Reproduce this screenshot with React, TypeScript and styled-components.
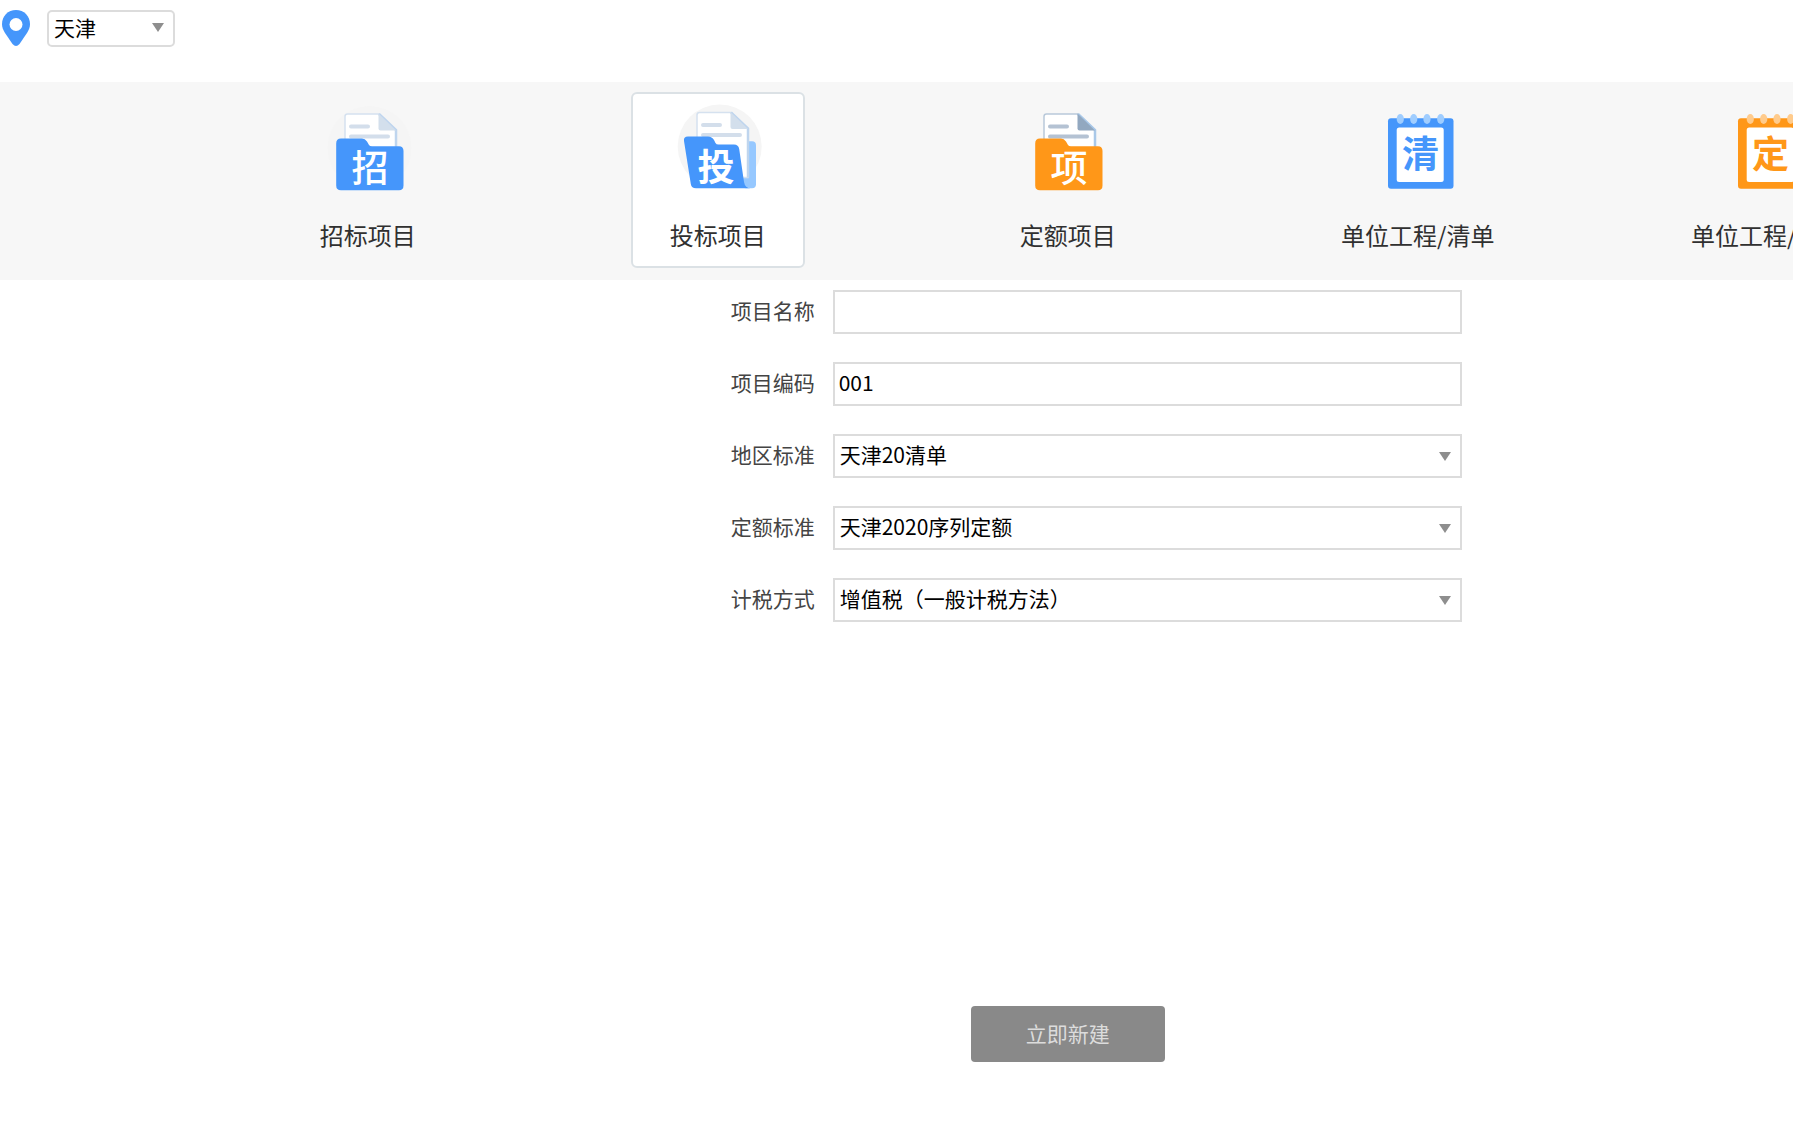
import React, { useState } from 'react';
import styled, { createGlobalStyle } from 'styled-components';

const BLUE = '#4596fb';
const ORANGE = '#ff9718';
const FONT = '"Noto Sans CJK SC", "Noto Sans", sans-serif';

const GlobalStyle = createGlobalStyle`
  *, *::before, *::after { box-sizing: border-box; }
  body {
    margin: 0;
    background: #fff;
    font-family: ${FONT};
    overflow: hidden;
  }
  button, input, select { font-family: inherit; }
`;

const Viewport = styled.div`
  overflow: hidden;
`;

/* The workspace is wider than the window; its right side is cut off. */
const Workspace = styled.main`
  display: flex;
  flex-direction: column;
  width: 119.1vw;
  min-height: 100vh;
  padding-bottom: 77px;
`;

const RegionBar = styled.header`
  display: flex;
  align-items: flex-start;
  gap: 16px;
  height: 82px;
  padding: 10px 1px;
`;

const Pin = styled.svg`
  flex: none;
  width: 30px;
  height: 36px;
`;

const TypeBar = styled.nav`
  display: grid;
  grid-template-columns: repeat(5, minmax(0, 350px));
  justify-content: center;
  justify-items: center;
  padding: 10px 0 12px;
  background: #f7f7f7;
`;

const TypeCard = styled.button<{ $active: boolean }>`
  display: flex;
  flex-direction: column;
  align-items: center;
  gap: 26px;
  min-width: 174px;
  height: 176px;
  padding: 11px 6px;
  border: 2px solid ${(p) => (p.$active ? '#dbe1e5' : 'transparent')};
  border-radius: 6px;
  background: ${(p) => (p.$active ? '#fff' : 'transparent')};
  color: #303030;
  font-size: 24px;
  line-height: 32px;
  white-space: nowrap;
  cursor: pointer;
`;

const TypeIcon = styled.svg`
  flex: none;
  width: 84px;
  height: 88px;
  overflow: visible;
`;

const Glyph = styled.text`
  font-family: ${FONT};
  font-size: 37px;
  font-weight: 500;
  text-anchor: middle;
`;

const BoldGlyph = styled(Glyph)`
  font-weight: 700;
`;

const Form = styled.form`
  display: flex;
  flex: 1;
  flex-direction: column;
  align-items: center;
  gap: 28px;
  padding-top: 10px;
`;

const Row = styled.div`
  display: grid;
  grid-template-columns: 141px minmax(0, 1fr);
  align-items: center;
  column-gap: 18px;
  width: 100%;
  max-width: 788px;
`;

const Label = styled.label`
  padding-bottom: 4px;
  color: #444;
  font-size: 21px;
  line-height: 30px;
  text-align: right;
`;

const TextInput = styled.input`
  width: 100%;
  height: 44px;
  padding: 0 4px 4px;
  border: 2px solid #dcdcdc;
  border-radius: 0;
  background: #fff;
  color: #000;
  font-size: 21px;
  outline: none;
`;

const SelectBox = styled.div<{ $compact?: boolean }>`
  position: relative;
  width: ${(p) => (p.$compact ? '128px' : '100%')};

  &::after {
    content: '';
    position: absolute;
    top: calc(50% - ${(p) => (p.$compact ? 6 : 4)}px);
    right: 11px;
    border: 6px solid transparent;
    border-top: 9px solid #8e8e8e;
    border-bottom: 0;
    pointer-events: none;
  }
`;

const Select = styled.select<{ $compact?: boolean }>`
  display: block;
  width: 100%;
  height: ${(p) => (p.$compact ? '37px' : '44px')};
  padding: 0 28px 4px 5px;
  border: 2px solid #dcdcdc;
  border-radius: ${(p) => (p.$compact ? '5px' : '0')};
  appearance: none;
  background: #fff;
  color: #000;
  font-size: 21px;
  outline: none;
`;

const CreateButton = styled.button`
  width: 194px;
  height: 56px;
  margin-top: auto;
  padding: 0 0 2px;
  border: 0;
  border-radius: 4px;
  background: #898989;
  color: #dcdcdc;
  font-size: 21px;
`;

const lightDoc = { edge: '#d5e1ef', side: '#bfd5ee', fold: '#d3dfec', line: '#d3deeb' };
const darkDoc = { edge: '#b9c9da', side: '#a9c8e8', fold: '#92a8c0', line: '#b4c2d3' };

function Sheet({ tone, bottom }: { tone: typeof lightDoc; bottom: number }) {
  return (
    <g>
      <path
        d={`M20 ${bottom}V11.500Q20 9 22.500 9H54L71 25V${bottom}Z`}
        fill="#fff"
        stroke={tone.edge}
        strokeWidth="1.500"
      />
      <path d={`M54 9L71 25V${bottom}`} fill="none" stroke={tone.side} strokeWidth="2.500" />
      <path d="M53.500 8.500L71 25.500H55.500Q53.500 25.500 53.500 23.500Z" fill={tone.fold} />
      <path d="M26 21.500H43M26 31.500H63" stroke={tone.line} strokeWidth="4" strokeLinecap="round" />
    </g>
  );
}

function FolderIcon({ glyph, color, dark }: { glyph: string; color: string; dark?: boolean }) {
  return (
    <TypeIcon viewBox={dark ? '2 0 84 88' : '1 0 84 88'} aria-hidden="true">
      {!dark && <circle cx="44.500" cy="43" r="42" fill="#f5f5f5" />}
      <Sheet tone={dark ? darkDoc : lightDoc} bottom={60} />
      <path
        d="M16 33.500H37Q40 33.500 42 36.500L44 40Q44.800 41.300 47 41.300H74Q78.500 41.300 78.500 46V80.500Q78.500 85.300 74 85.300H16Q11.200 85.300 11.200 80.500V38.500Q11.200 33.500 16 33.500Z"
        fill={color}
      />
      <Glyph x="45" y="77" fill="#fff">{glyph}</Glyph>
    </TypeIcon>
  );
}

function OpenFolderIcon({ glyph }: { glyph: string }) {
  return (
    <TypeIcon viewBox="0 0 84 88" aria-hidden="true">
      <circle cx="43.700" cy="41.500" r="42" fill="#f5f5f5" />
      <rect x="66" y="36.300" width="14" height="47" rx="4" fill="#96c8ff" />
      <g transform="translate(1 -1.500)">
        <Sheet tone={lightDoc} bottom={74} />
      </g>
      <path
        d="M12 31.500H32Q36 31.500 38 35L39.500 38Q40.300 39.500 42.500 39.500H58Q62.500 39.500 63.200 44L68 77Q69 83.300 75 83.300H20Q15.500 83.300 14.800 79L8 36Q7.300 31.500 12 31.500Z"
        fill={BLUE}
      />
      <BoldGlyph x="40" y="76" fill="#fff">{glyph}</BoldGlyph>
    </TypeIcon>
  );
}

function NotepadIcon({ glyph, color, ring }: { glyph: string; color: string; ring: string }) {
  return (
    <TypeIcon viewBox="1 0 84 88" aria-hidden="true">
      <rect x="13" y="13.300" width="65.500" height="70.500" rx="3" fill={color} />
      <rect x="21.700" y="22.500" width="47" height="54.500" rx="2.500" fill="#fff" />
      {[25.3, 38.7, 52, 65.7].map((x) => (
        <ellipse key={x} cx={x} cy="14" rx="3.600" ry="5" fill={ring} />
      ))}
      <BoldGlyph x="45.500" y="63" fill={color}>{glyph}</BoldGlyph>
    </TypeIcon>
  );
}

const projectTypes = [
  { id: 'tender', label: '招标项目', icon: <FolderIcon glyph="招" color={BLUE} /> },
  { id: 'bid', label: '投标项目', icon: <OpenFolderIcon glyph="投" /> },
  { id: 'quota', label: '定额项目', icon: <FolderIcon glyph="项" color={ORANGE} dark /> },
  { id: 'unit-list', label: '单位工程/清单', icon: <NotepadIcon glyph="清" color={BLUE} ring="#9fcdff" /> },
  { id: 'unit-quota', label: '单位工程/定额', icon: <NotepadIcon glyph="定" color={ORANGE} ring="#ffcb8c" /> },
];

const selectFields = [
  { id: 'region-standard', label: '地区标准', value: '天津20清单' },
  { id: 'quota-standard', label: '定额标准', value: '天津2020序列定额' },
  { id: 'tax-method', label: '计税方式', value: '增值税（一般计税方法）' },
];

export default function App() {
  const [active, setActive] = useState('bid');
  const [name, setName] = useState('');
  const [code, setCode] = useState('001');

  return (
    <Viewport>
      <GlobalStyle />
      <Workspace>
        <RegionBar>
          <Pin viewBox="0 0 30 36" aria-hidden="true">
            <path
              d="M15 0C7 0 1 6.200 1 14C1 17.500 2.200 20 4 23L11.500 34Q15 38 18.500 34L26 23C27.800 20 29 17.500 29 14C29 6.200 23 0 15 0Z"
              fill={BLUE}
            />
            <circle cx="15" cy="14.500" r="6.500" fill="#fff" />
          </Pin>
          <SelectBox $compact>
            <Select $compact aria-label="地区" defaultValue="天津">
              <option>天津</option>
            </Select>
          </SelectBox>
        </RegionBar>

        <TypeBar>
          {projectTypes.map((type) => (
            <TypeCard
              key={type.id}
              type="button"
              $active={type.id === active}
              aria-pressed={type.id === active}
              onClick={() => setActive(type.id)}
            >
              {type.icon}
              {type.label}
            </TypeCard>
          ))}
        </TypeBar>

        <Form onSubmit={(e) => e.preventDefault()}>
          <Row>
            <Label htmlFor="project-name">项目名称</Label>
            <TextInput id="project-name" value={name} onChange={(e) => setName(e.target.value)} />
          </Row>
          <Row>
            <Label htmlFor="project-code">项目编码</Label>
            <TextInput id="project-code" value={code} onChange={(e) => setCode(e.target.value)} />
          </Row>
          {selectFields.map((field) => (
            <Row key={field.id}>
              <Label htmlFor={field.id}>{field.label}</Label>
              <SelectBox>
                <Select id={field.id} defaultValue={field.value}>
                  <option>{field.value}</option>
                </Select>
              </SelectBox>
            </Row>
          ))}
          <CreateButton type="submit" disabled={name === ''}>立即新建</CreateButton>
        </Form>
      </Workspace>
    </Viewport>
  );
}
